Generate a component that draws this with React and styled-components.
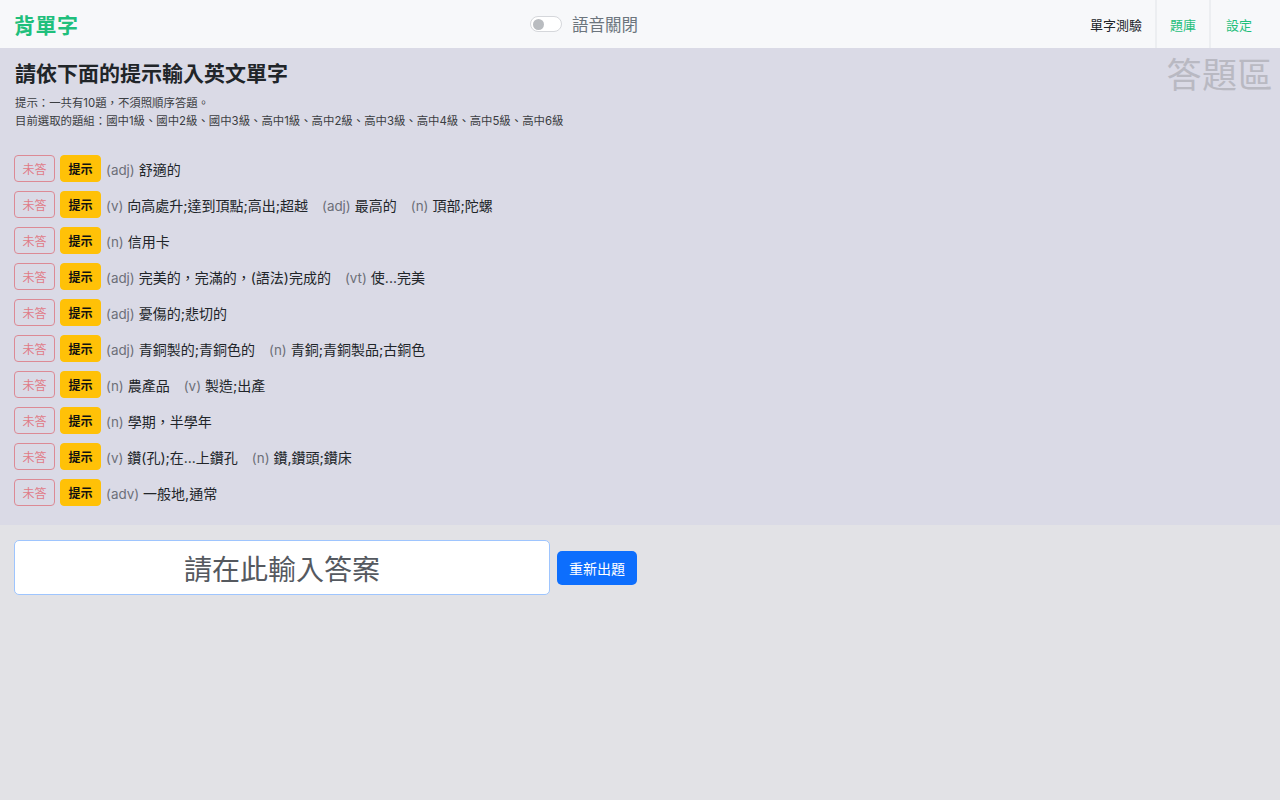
import React, { useState } from 'react'
import styled, { createGlobalStyle } from 'styled-components'

const GlobalStyle = createGlobalStyle`
  html, body {
    margin: 0;
    padding: 0;
    background: #e2e2e6;
    font-family: Inter, 'Noto Sans CJK TC', sans-serif;
    color: #212529;
  }
  * { box-sizing: border-box; }
`

const Navbar = styled.nav`
  height: 48px;
  background: #f7f8fa;
  display: grid;
  grid-template-columns: 516px auto 1fr;
  align-items: center;
  padding-left: 14px;
`
const Brand = styled.div`
  font-size: 21px;
  font-weight: 700;
  color: #1fbf7c;
  letter-spacing: 0.5px;
`
const VoiceToggle = styled.label`
  display: flex;
  align-items: center;
  gap: 10px;
  font-size: 16.5px;
  color: #6c757d;
`
const Switch = styled.span`
  width: 32px;
  height: 16px;
  border-radius: 8px;
  border: 1px solid #d5d7db;
  background: #fff;
  display: flex;
  align-items: center;
  padding-left: 2px;
  &::before {
    content: '';
    width: 11px;
    height: 11px;
    border-radius: 50%;
    background: #b9bcc0;
  }
`
const NavLinks = styled.div`
  display: flex;
  justify-content: flex-end;
  height: 100%;
`
const NavLink = styled.a`
  display: flex;
  align-items: center;
  height: 100%;
  padding: 0 13px 0 13px;
  font-size: 13px;
  color: ${(p) => (p.$active ? '#1fbf7c' : '#212529')};
  border-left: ${(p) => (p.$sep ? '2px solid #eceef1' : 'none')};
  cursor: pointer;
  &:last-child { padding-right: 28px; padding-left: 15px; }
`

const Board = styled.section`
  position: relative;
  background: #dadae6;
  padding: 13px 15px 19px 14px;
`
const Title = styled.h1`
  margin: 0 0 7px 1px;
  font-size: 21px;
  font-weight: 700;
  line-height: 26px;
`
const Hint = styled.p`
  margin: 0 0 0 1px;
  font-size: 11.4px;
  line-height: 18px;
  color: #3a3d42;
`
const Watermark = styled.div`
  position: absolute;
  right: 7px;
  top: -1px;
  font-size: 35px;
  color: #b9b9c2;
  letter-spacing: 0.5px;
`
const List = styled.div`
  margin-top: 25px;
  display: flex;
  flex-direction: column;
  gap: 9px;
`
const Row = styled.div`
  display: flex;
  align-items: center;
  gap: 5px;
  height: 27px;
`
const Tag = styled.span`
  width: 41px;
  height: 27px;
  border-radius: 4px;
  display: flex;
  align-items: center;
  justify-content: center;
  font-size: 12px;
  ${(p) =>
    p.$hint
      ? 'background: #ffc107; color: #111; font-weight: 700; border: 1px solid #ffc107;'
      : 'background: transparent; color: #e07a86; border: 1px solid #dc8a95;'}
`
const Meaning = styled.span`
  font-size: 14px;
  color: #212529;
  white-space: pre;
`
const Pos = styled.span`
  color: #6c6f78;
  font-size: 13.4px;
  margin-right: 4px;
`
const Part = styled.span`
  margin-right: 14px;
`

const AnswerBar = styled.div`
  display: flex;
  align-items: center;
  gap: 7px;
  padding: 15px 14px;
`
const AnswerInput = styled.input`
  width: 536px;
  height: 55px;
  border: 1px solid #9ec5fe;
  border-radius: 5px;
  background: #fff;
  text-align: center;
  font-size: 28px;
  font-family: 'Noto Sans CJK TC', sans-serif;
  color: #212529;
  outline: none;
  &::placeholder { color: #55595f; }
`
const BlueButton = styled.button`
  height: 34px;
  padding: 0 12px;
  border: none;
  border-radius: 5px;
  background: #0d6efd;
  color: #fff;
  font-size: 14px;
  font-family: 'Noto Sans CJK TC', sans-serif;
  cursor: pointer;
`

const words = [
  [['adj', '舒適的']],
  [['v', '向高處升;達到頂點;高出;超越'], ['adj', '最高的'], ['n', '頂部;陀螺']],
  [['n', '信用卡']],
  [['adj', '完美的，完滿的，(語法)完成的'], ['vt', '使...完美']],
  [['adj', '憂傷的;悲切的']],
  [['adj', '青銅製的;青銅色的'], ['n', '青銅;青銅製品;古銅色']],
  [['n', '農產品'], ['v', '製造;出產']],
  [['n', '學期，半學年']],
  [['v', '鑽(孔);在...上鑽孔'], ['n', '鑽,鑽頭;鑽床']],
  [['adv', '一般地,通常']],
]

export default function App() {
  const [answer, setAnswer] = useState('')
  return (
    <>
      <GlobalStyle />
      <Navbar>
        <Brand>背單字</Brand>
        <VoiceToggle>
          <Switch />
          語音關閉
        </VoiceToggle>
        <NavLinks>
          <NavLink>單字測驗</NavLink>
          <NavLink $sep $active>題庫</NavLink>
          <NavLink $sep $active>設定</NavLink>
        </NavLinks>
      </Navbar>
      <Board>
        <Watermark>答題區</Watermark>
        <Title>請依下面的提示輸入英文單字</Title>
        <Hint>提示：一共有10題，不須照順序答題。</Hint>
        <Hint>目前選取的題組：國中1級、國中2級、國中3級、高中1級、高中2級、高中3級、高中4級、高中5級、高中6級</Hint>
        <List>
          {words.map((parts, i) => (
            <Row key={i}>
              <Tag>未答</Tag>
              <Tag $hint>提示</Tag>
              <Meaning>
                {parts.map(([pos, txt], j) => (
                  <Part key={j}>
                    <Pos>({pos})</Pos>
                    {txt}
                  </Part>
                ))}
              </Meaning>
            </Row>
          ))}
        </List>
      </Board>
      <AnswerBar>
        <AnswerInput
          placeholder='請在此輸入答案'
          value={answer}
          onChange={(e) => setAnswer(e.target.value)}
        />
        <BlueButton>重新出題</BlueButton>
      </AnswerBar>
    </>
  )
}
